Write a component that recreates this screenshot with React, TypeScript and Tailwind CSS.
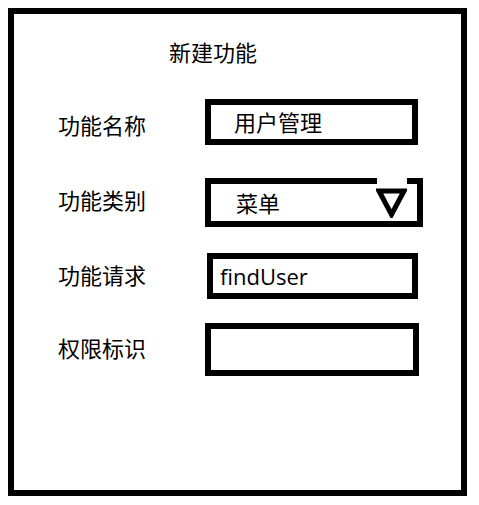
import React from "react";

const font = { fontFamily: '"Open Sans", "Noto Sans CJK SC", sans-serif' };

export default function App() {
  return (
    <div className="bg-white w-[479px] h-[505px] pt-[8px] pl-[8px]" style={font}>
      <div className="w-[459px] h-[488px] border-[6px] border-black flex flex-col text-[22px] leading-[22px] text-black">
        <div className="mt-[27px] ml-[155px]">新建功能</div>

        {/* Row 1 */}
        <div className="mt-[36px] flex items-start">
          <div className="ml-[44px] w-[147px] mt-[15px]">功能名称</div>
          <div className="w-[213px] h-[46px] border-[6px] border-black flex items-center pl-[23px]">
            用户管理
          </div>
        </div>

        {/* Row 2 */}
        <div className="mt-[33px] flex items-start">
          <div className="ml-[44px] w-[147px] mt-[11px]">功能类别</div>
          <div className="relative w-[218px] h-[49px] border-[6px] border-black flex items-center justify-between pl-[25px] pr-[10px]">
            <span>菜单</span>
            <svg width="31" height="30" viewBox="0 0 31 30" className="block">
              <polygon
                points="3,3 28,3 15.5,26.5"
                fill="white"
                stroke="black"
                strokeWidth="5"
                strokeLinejoin="miter"
              />
            </svg>
            <div className="absolute top-[-6px] left-[166px] w-[30px] h-[6px] bg-white" />
          </div>
        </div>

        {/* Row 3 */}
        <div className="mt-[26px] flex items-start">
          <div className="ml-[44px] w-[149px] mt-[11px]">功能请求</div>
          <div className="w-[211px] h-[46px] border-[6px] border-black flex items-center pl-[7px]">
            findUser
          </div>
        </div>

        {/* Row 4 */}
        <div className="mt-[24px] flex items-start">
          <div className="ml-[44px] w-[147px] mt-[14px]">权限标识</div>
          <div className="w-[214px] h-[53px] border-[6px] border-black" />
        </div>
      </div>
    </div>
  );
}
